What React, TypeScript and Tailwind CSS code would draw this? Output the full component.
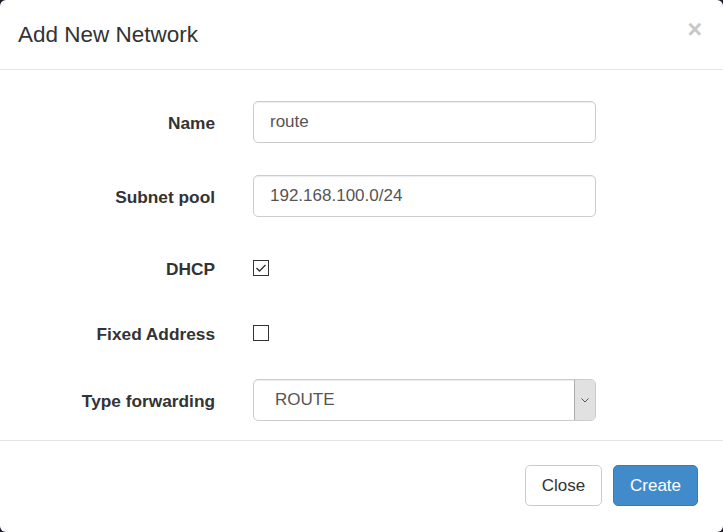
export default function App() {
  const font = { fontFamily: '"Liberation Sans", Arial, sans-serif' };
  return (
    <div className="w-[723px] h-[532px] bg-[#1f1a28]" style={font}>
      <div className="w-[723px] h-[532px] bg-white rounded-[6px] flex flex-col overflow-hidden">
        {/* Header */}
        <div className="h-[70px] flex items-center justify-between pl-[18px] pr-[21px] border-b border-[#e5e5e5] shrink-0">
          <h4 className="text-[22.5px] text-[#333] leading-none pt-[2px]">Add New Network</h4>
          <span className="text-[25px] font-bold text-[#c8c8c8] leading-none pb-[10px]">×</span>
        </div>

        {/* Body */}
        <div className="flex flex-col pb-[19px] border-b border-[#e5e5e5] shrink-0">
          <Row mt="mt-[31px]" h="h-[42px]" label="Name">
            <input
              readOnly
              value="route"
              className="w-[343px] h-[42px] border border-[#ccc] rounded-[5px] pl-[16px] text-[17px] text-[#555] shadow-[inset_0_1px_1px_rgba(0,0,0,0.075)] outline-none"
            />
          </Row>
          <Row mt="mt-[32px]" h="h-[42px]" label="Subnet pool">
            <input
              readOnly
              value="192.168.100.0/24"
              className="w-[343px] h-[42px] border border-[#ccc] rounded-[5px] pl-[16px] text-[17px] text-[#555] shadow-[inset_0_1px_1px_rgba(0,0,0,0.075)] outline-none"
            />
          </Row>
          <Row mt="mt-[33px]" h="h-[36px]" label="DHCP">
            <Box checked />
          </Row>
          <Row mt="mt-[29px]" h="h-[36px]" label="Fixed Address">
            <Box />
          </Row>
          <Row mt="mt-[28px]" h="h-[42px]" label="Type forwarding">
            <div className="w-[343px] h-[42px] border border-[#ccc] rounded-[5px] flex items-center justify-between shadow-[inset_0_1px_1px_rgba(0,0,0,0.075)]">
              <span className="pl-[21px] text-[17px] text-[#555]">ROUTE</span>
              <div className="w-[21px] h-[40px] bg-[#e1e1e1] border-l border-[#acacac] rounded-r-[4px] flex items-center justify-center">
                <svg width="8" height="5" viewBox="0 0 8 5">
                  <path d="M0.5 0.5 L4 4 L7.5 0.5" fill="none" stroke="#555" strokeWidth="1" />
                </svg>
              </div>
            </div>
          </Row>
        </div>

        {/* Footer */}
        <div className="flex justify-end gap-[11px] pt-[24px] pr-[25px]">
          <button className="w-[77px] h-[41px] border border-[#ccc] rounded-[5px] bg-white text-[17px] text-[#333]">
            Close
          </button>
          <button className="w-[85px] h-[41px] border border-[#357ebd] rounded-[5px] bg-[#428bca] text-[17px] text-white">
            Create
          </button>
        </div>
      </div>
    </div>
  );
}

function Row({ mt, h, label, children }: { mt: string; h: string; label: string; children: React.ReactNode }) {
  return (
    <div className={`flex items-center ${mt} ${h}`}>
      <label className="w-[215px] text-right text-[17.3px] font-bold text-[#333] pt-[3px]">{label}</label>
      <div className="ml-[38px] flex items-center">{children}</div>
    </div>
  );
}

function Box({ checked = false }: { checked?: boolean }) {
  return (
    <div className="w-[16px] h-[16px] border border-[#333] bg-white flex items-center justify-center">
      {checked && (
        <svg width="12" height="10" viewBox="0 0 12 10">
          <path d="M1.5 5 L4.5 8 L10.5 2" fill="none" stroke="#333" strokeWidth="1.4" />
        </svg>
      )}
    </div>
  );
}
